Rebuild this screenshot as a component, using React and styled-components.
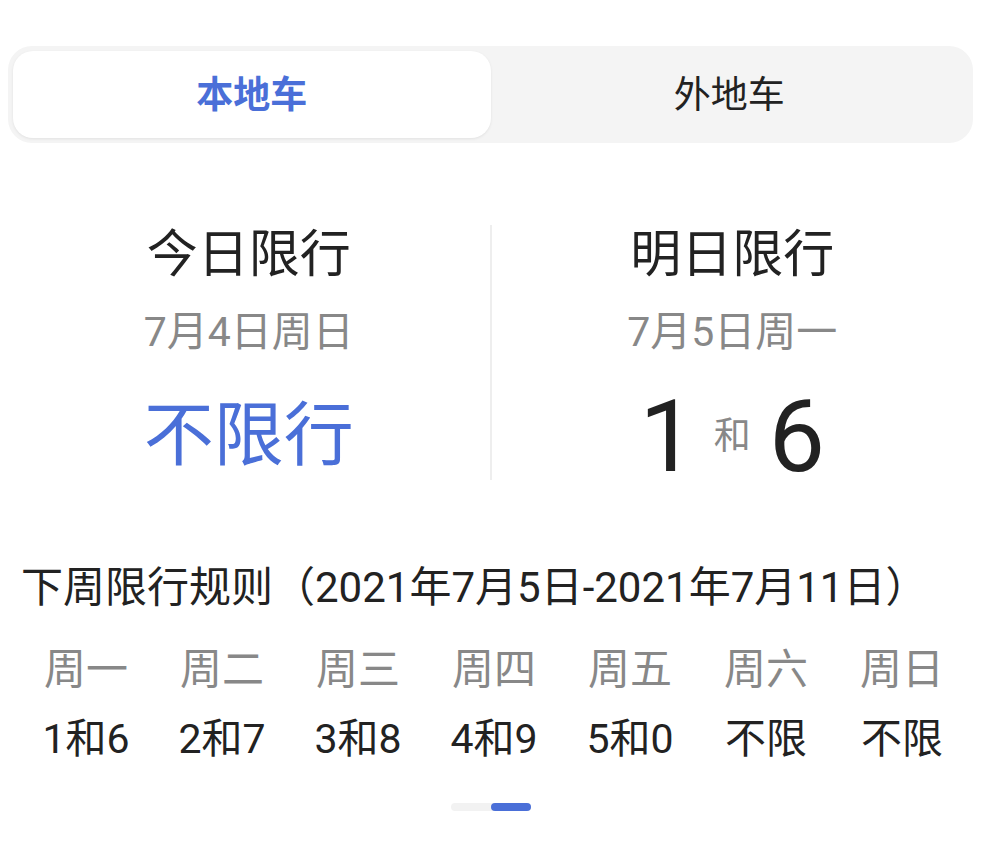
import React from "react";
import styled, { createGlobalStyle } from "styled-components";

const Global = createGlobalStyle`
  html, body { margin: 0; padding: 0; background: #ffffff; }
  body { font-family: Roboto, "Noto Sans CJK SC", sans-serif; color: #222222; }
`;

const BLUE = "#4a6fd8";

const Page = styled.div`
  width: 989px;
  box-sizing: border-box;
  padding: 46px 16px 0 8px;
`;

const Tabs = styled.div`
  display: flex;
  height: 97px;
  box-sizing: border-box;
  padding: 5px;
  background: #f4f4f4;
  border-radius: 24px;
`;

const Tab = styled.div`
  flex: 1;
  display: flex;
  align-items: center;
  justify-content: center;
  padding-bottom: 5px;
  border-radius: 20px;
  font-size: 37px;
  font-weight: ${(p) => (p.$active ? 700 : 400)};
  color: ${(p) => (p.$active ? BLUE : "#222222")};
  background: ${(p) => (p.$active ? "#ffffff" : "transparent")};
  box-shadow: ${(p) => (p.$active ? "0 1px 3px rgba(0,0,0,0.08)" : "none")};
`;

const Stats = styled.div`
  display: flex;
  margin-top: 82px;
`;

const Column = styled.div`
  flex: 1;
  display: flex;
  flex-direction: column;
  align-items: center;
  border-right: ${(p) => (p.$divider ? "2px solid #eeeeee" : "none")};
  height: 255px;
`;

const Title = styled.div`
  font-size: 51px;
  line-height: 60px;
  color: #222222;
`;

const DateText = styled.div`
  margin-top: 23px;
  font-size: 41px;
  line-height: 48px;
  color: #888888;
`;

const ValueRow = styled.div`
  margin-top: 36px;
  height: 90px;
  display: flex;
  align-items: center;
  justify-content: center;
`;

const NoLimit = styled.div`
  font-size: 70px;
  line-height: 80px;
  color: ${BLUE};
`;

const Digits = styled.div`
  display: flex;
  align-items: baseline;
  gap: 18px;
`;

const BigDigit = styled.span`
  font-size: 100px;
  line-height: 100px;
  color: #222222;
`;

const And = styled.span`
  font-size: 37px;
  color: #888888;
  position: relative;
  top: -22px;
`;

const Heading = styled.div`
  margin-top: 84px;
  padding-left: 13px;
  font-size: 42px;
  line-height: 48px;
  color: #222222;
  white-space: nowrap;
`;

const Week = styled.div`
  display: grid;
  grid-template-columns: repeat(7, 136px);
  margin-top: 34px;
  padding-left: 10px;
`;

const Day = styled.div`
  display: flex;
  flex-direction: column;
  align-items: center;
`;

const DayName = styled.div`
  font-size: 42px;
  line-height: 48px;
  color: #888888;
`;

const DayRule = styled.div`
  margin-top: 21px;
  font-size: 41px;
  line-height: 48px;
  color: #222222;
`;

const Indicator = styled.div`
  margin: 40px auto 0;
  width: 80px;
  height: 8px;
  border-radius: 4px;
  background: #f2f2f2;
  display: flex;
  justify-content: flex-end;
`;

const IndicatorThumb = styled.div`
  width: 40px;
  height: 8px;
  border-radius: 4px;
  background: ${BLUE};
`;

const days = [
  ["周一", "1和6"],
  ["周二", "2和7"],
  ["周三", "3和8"],
  ["周四", "4和9"],
  ["周五", "5和0"],
  ["周六", "不限"],
  ["周日", "不限"],
];

export default function App() {
  return (
    <Page>
      <Global />
      <Tabs>
        <Tab $active>本地车</Tab>
        <Tab>外地车</Tab>
      </Tabs>
      <Stats>
        <Column $divider>
          <Title>今日限行</Title>
          <DateText>7月4日周日</DateText>
          <ValueRow>
            <NoLimit>不限行</NoLimit>
          </ValueRow>
        </Column>
        <Column>
          <Title>明日限行</Title>
          <DateText>7月5日周一</DateText>
          <ValueRow>
            <Digits>
              <BigDigit>1</BigDigit>
              <And>和</And>
              <BigDigit>6</BigDigit>
            </Digits>
          </ValueRow>
        </Column>
      </Stats>
      <Heading>下周限行规则（2021年7月5日-2021年7月11日）</Heading>
      <Week>
        {days.map(([d, r]) => (
          <Day key={d}>
            <DayName>{d}</DayName>
            <DayRule>{r}</DayRule>
          </Day>
        ))}
      </Week>
      <Indicator>
        <IndicatorThumb />
      </Indicator>
    </Page>
  );
}
